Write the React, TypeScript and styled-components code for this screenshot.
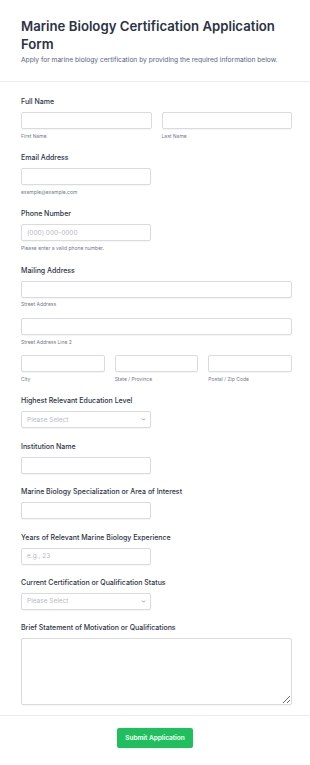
import React from "react"
import styled, { createGlobalStyle } from "styled-components"
import { ChevronDown } from "lucide-react"

const GlobalStyle = createGlobalStyle`
  html, body {
    margin: 0;
    padding: 0;
    background: #ffffff;
  }
  body {
    font-family: Inter, "Liberation Sans", sans-serif;
    color: #2c3345;
  }
  * {
    box-sizing: border-box;
  }
`

const Page = styled.div`
  width: 310px;
  background: #ffffff;
`
const Header = styled.header`
  padding: 17px 21px 16px;
  border-bottom: 1px solid #eaecf0;
`
const Title = styled.h1`
  margin: 0;
  font-size: 13.2px;
  line-height: 18px;
  font-weight: 600;
  color: #2c3345;
`
const Subtitle = styled.p`
  margin: 3px 0 0;
  font-size: 6.65px;
  line-height: 9px;
  color: #57647e;
`
const Form = styled.form`
  display: flex;
  flex-direction: column;
  gap: 13.4px;
  padding: 15px 18px 10px 21px;
  border-bottom: 1px solid #eaecf0;
`
const Field = styled.div`
  display: flex;
  flex-direction: column;
`
const Label = styled.label`
  display: block;
  font-size: 7px;
  line-height: 10px;
  font-weight: 500;
  color: #2c3345;
  margin-bottom: 5px;
`
const Row = styled.div<{ $cols: number; $spaced?: boolean }>`
  display: grid;
  grid-template-columns: repeat(${(p) => p.$cols}, 1fr);
  column-gap: 10px;
  row-gap: 9.5px;
  margin-top: ${(p) => (p.$spaced ? "9.5px" : "0")};
`
const Cell = styled.div`
  display: flex;
  flex-direction: column;
`
const Input = styled.input<{ $half?: boolean }>`
  display: block;
  width: ${(p) => (p.$half ? "130px" : "100%")};
  height: 17px;
  margin: 0;
  border: 1px solid #d8dbe2;
  border-radius: 2px;
  padding: 0 5px;
  font-family: inherit;
  font-size: 6.5px;
  color: #2c3345;
  background: #ffffff;
  box-shadow: 0 0.5px 1px rgba(0, 0, 0, 0.04);
  outline: none;
  &::placeholder {
    color: #b3bac8;
  }
`
const Sub = styled.span`
  display: block;
  margin-top: 3.8px;
  font-size: 5px;
  line-height: 7px;
  color: #6f7a90;
`
const SelectWrap = styled.div`
  position: relative;
  width: 130px;
  height: 17px;
`
const Select = styled.select`
  display: block;
  appearance: none;
  width: 100%;
  height: 17px;
  margin: 0;
  border: 1px solid #d8dbe2;
  border-radius: 2px;
  padding: 0 5px;
  font-family: inherit;
  font-size: 6.5px;
  color: #b3bac8;
  background: #ffffff;
  box-shadow: 0 0.5px 1px rgba(0, 0, 0, 0.04);
  outline: none;
`
const Chevron = styled(ChevronDown)`
  position: absolute;
  right: 5px;
  top: 6px;
  width: 5px;
  height: 5px;
  color: #57647e;
  pointer-events: none;
`
const TextArea = styled.textarea`
  display: block;
  width: 100%;
  height: 67px;
  margin: 0;
  border: 1px solid #d8dbe2;
  border-radius: 2px;
  font-family: inherit;
  font-size: 6.5px;
  box-shadow: 0 0.5px 1px rgba(0, 0, 0, 0.04);
  outline: none;
`
const Footer = styled.div`
  display: flex;
  justify-content: center;
  padding: 11.5px 0 18px;
`
const Button = styled.button`
  height: 20px;
  padding: 0 8px;
  border: none;
  border-radius: 2px;
  background: #1fbf5d;
  color: #ffffff;
  font-family: inherit;
  font-size: 6.5px;
  font-weight: 600;
`

const App = (): JSX.Element => {
  return (
    <Page>
      <GlobalStyle />
      <Header>
        <Title>Marine Biology Certification Application Form</Title>
        <Subtitle>Apply for marine biology certification by providing the required information below.</Subtitle>
      </Header>
      <Form onSubmit={(e) => e.preventDefault()}>
        <Field>
          <Label>Full Name</Label>
          <Row $cols={2}>
            <Cell>
              <Input />
              <Sub>First Name</Sub>
            </Cell>
            <Cell>
              <Input />
              <Sub>Last Name</Sub>
            </Cell>
          </Row>
        </Field>
        <Field>
          <Label>Email Address</Label>
          <Input $half type="email" />
          <Sub>example@example.com</Sub>
        </Field>
        <Field>
          <Label>Phone Number</Label>
          <Input $half placeholder="(000) 000-0000" />
          <Sub>Please enter a valid phone number.</Sub>
        </Field>
        <Field>
          <Label>Mailing Address</Label>
          <Row $cols={1}>
            <Cell>
              <Input />
              <Sub>Street Address</Sub>
            </Cell>
            <Cell>
              <Input />
              <Sub>Street Address Line 2</Sub>
            </Cell>
          </Row>
          <Row $cols={3} $spaced>
            <Cell>
              <Input />
              <Sub>City</Sub>
            </Cell>
            <Cell>
              <Input />
              <Sub>State / Province</Sub>
            </Cell>
            <Cell>
              <Input />
              <Sub>Postal / Zip Code</Sub>
            </Cell>
          </Row>
        </Field>
        <Field>
          <Label>Highest Relevant Education Level</Label>
          <SelectWrap>
            <Select defaultValue="">
              <option value="">Please Select</option>
            </Select>
            <Chevron strokeWidth={3} />
          </SelectWrap>
        </Field>
        <Field>
          <Label>Institution Name</Label>
          <Input $half />
        </Field>
        <Field>
          <Label>Marine Biology Specialization or Area of Interest</Label>
          <Input $half />
        </Field>
        <Field>
          <Label>Years of Relevant Marine Biology Experience</Label>
          <Input $half placeholder="e.g., 23" />
        </Field>
        <Field>
          <Label>Current Certification or Qualification Status</Label>
          <SelectWrap>
            <Select defaultValue="">
              <option value="">Please Select</option>
            </Select>
            <Chevron strokeWidth={3} />
          </SelectWrap>
        </Field>
        <Field>
          <Label>Brief Statement of Motivation or Qualifications</Label>
          <TextArea />
        </Field>
      </Form>
      <Footer>
        <Button type="submit">Submit Application</Button>
      </Footer>
    </Page>
  )
}

export default App
